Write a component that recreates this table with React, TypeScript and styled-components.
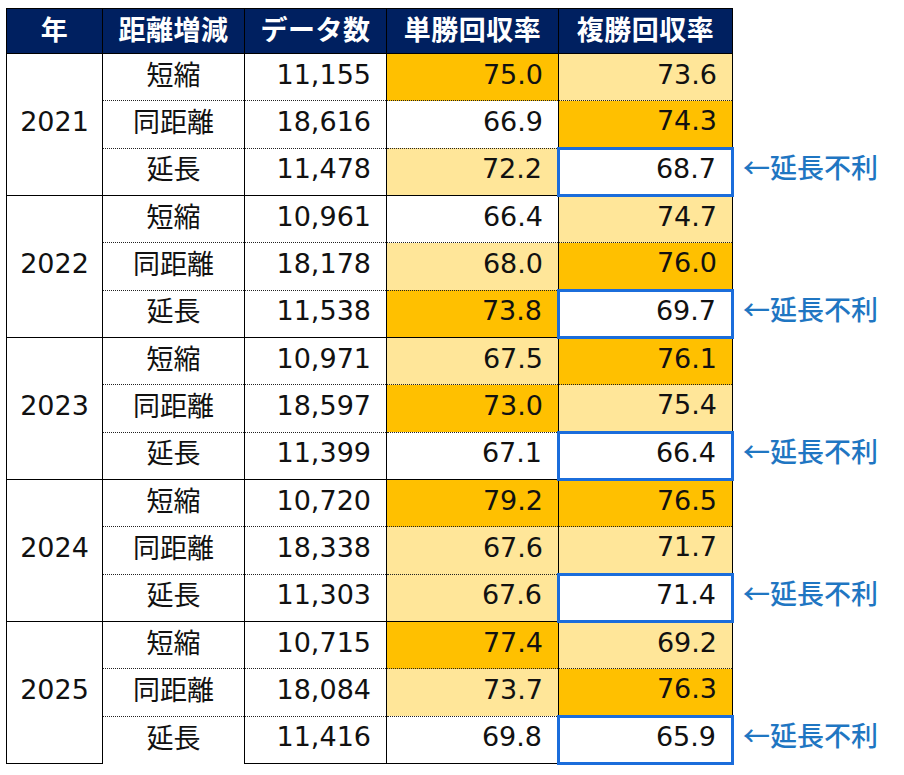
import React from 'react';
import styled, { createGlobalStyle, css } from 'styled-components';

type Tone = 'dark' | 'light' | 'none';

type Row = {
    label: string;
    count: string;
    win: [string, Tone];
    place: [string, Tone];
};

type YearGroup = {
    year: string;
    rows: Row[];
};

const data: YearGroup[] = [
    {
        year: '2021',
        rows: [
            { label: '短縮', count: '11,155', win: ['75.0', 'dark'], place: ['73.6', 'light'] },
            { label: '同距離', count: '18,616', win: ['66.9', 'none'], place: ['74.3', 'dark'] },
            { label: '延長', count: '11,478', win: ['72.2', 'light'], place: ['68.7', 'none'] },
        ],
    },
    {
        year: '2022',
        rows: [
            { label: '短縮', count: '10,961', win: ['66.4', 'none'], place: ['74.7', 'light'] },
            { label: '同距離', count: '18,178', win: ['68.0', 'light'], place: ['76.0', 'dark'] },
            { label: '延長', count: '11,538', win: ['73.8', 'dark'], place: ['69.7', 'none'] },
        ],
    },
    {
        year: '2023',
        rows: [
            { label: '短縮', count: '10,971', win: ['67.5', 'light'], place: ['76.1', 'dark'] },
            { label: '同距離', count: '18,597', win: ['73.0', 'dark'], place: ['75.4', 'light'] },
            { label: '延長', count: '11,399', win: ['67.1', 'none'], place: ['66.4', 'none'] },
        ],
    },
    {
        year: '2024',
        rows: [
            { label: '短縮', count: '10,720', win: ['79.2', 'dark'], place: ['76.5', 'dark'] },
            { label: '同距離', count: '18,338', win: ['67.6', 'light'], place: ['71.7', 'light'] },
            { label: '延長', count: '11,303', win: ['67.6', 'light'], place: ['71.4', 'none'] },
        ],
    },
    {
        year: '2025',
        rows: [
            { label: '短縮', count: '10,715', win: ['77.4', 'dark'], place: ['69.2', 'light'] },
            { label: '同距離', count: '18,084', win: ['73.7', 'light'], place: ['76.3', 'dark'] },
            { label: '延長', count: '11,416', win: ['69.8', 'none'], place: ['65.9', 'none'] },
        ],
    },
];

const headers = ['年', '距離増減', 'データ数', '単勝回収率', '複勝回収率'];
const widths = [96, 142, 142, 172, 174];

export default function App() {
    return (
        <>
            <GlobalStyle />
            <Page>
                <Table>
                    <colgroup>
                        {widths.map((w, i) => (
                            <col key={i} style={{ width: w }} />
                        ))}
                        <col />
                    </colgroup>
                    <thead>
                        <tr>
                            {headers.map((h) => (
                                <HeadCell key={h}>{h}</HeadCell>
                            ))}
                            <BlankHead />
                        </tr>
                    </thead>
                    <tbody>
                        {data.map((group) =>
                            group.rows.map((row, i) => {
                                const dotted = i > 0;
                                const isLonger = row.label === '延長';
                                return (
                                    <BodyRow key={group.year + row.label}>
                                        {i === 0 && <YearCell rowSpan={3}>{group.year}</YearCell>}
                                        <LabelCell $dotted={dotted}>{row.label}</LabelCell>
                                        <NumCell $dotted={dotted} $tone="none">{row.count}</NumCell>
                                        <NumCell $dotted={dotted} $tone={row.win[1]}>{row.win[0]}</NumCell>
                                        <NumCell $dotted={dotted} $tone={row.place[1]} $flag={isLonger}>
                                            {row.place[0]}
                                        </NumCell>
                                        <NoteCell>{isLonger ? '←延長不利' : ''}</NoteCell>
                                    </BodyRow>
                                );
                            })
                        )}
                    </tbody>
                </Table>
            </Page>
        </>
    );
}

const GlobalStyle = createGlobalStyle`
    body {
        margin: 0;
        background: #ffffff;
        font-family: "DejaVu Sans", "Noto Sans CJK JP", sans-serif;
    }
`;

const Page = styled.div`
    padding: 8px 0 0 6px;
    width: 904px;
    box-sizing: border-box;
`;

const Table = styled.table`
    border-collapse: collapse;
    table-layout: fixed;
    width: 898px;
    color: #111111;
    font-size: 27px;
`;

const HeadCell = styled.th`
    height: 39px;
    padding: 0 0 5px 0;
    background: #002060;
    color: #ffffff;
    font-family: "Noto Sans CJK JP", sans-serif;
    font-weight: 700;
    font-size: 27px;
    letter-spacing: 0.5px;
    border: 1px solid #000000;
    text-align: center;
    vertical-align: middle;
    line-height: 1;
`;

const BlankHead = styled.th`
    border: none;
    padding: 0;
`;

const BodyRow = styled.tr`
    height: 47.33px;
`;

const YearCell = styled.td`
    padding: 0 0 6px 0;
    border: 1px solid #000000;
    text-align: center;
    vertical-align: middle;
    line-height: 1;
`;

const toneColors: Record<Tone, string> = {
    dark: '#ffc000',
    light: '#ffe699',
    none: '#ffffff',
};

const LabelCell = styled.td<{ $dotted: boolean }>`
    padding: 0 0 8px 0;
    border-left: 1px solid #000000;
    border-right: 1px solid #000000;
    border-top: ${(p) => (p.$dotted ? '1px dotted #222222' : '1px solid #000000')};
    text-align: center;
    vertical-align: middle;
    font-family: "Noto Sans CJK JP", sans-serif;
    line-height: 1;
`;

const NumCell = styled.td<{ $dotted: boolean; $tone: Tone; $flag?: boolean }>`
    padding: 0 15px 6px 0;
    border-left: 1px solid #000000;
    border-right: 1px solid #000000;
    border-top: ${(p) => (p.$dotted ? '1px dotted #222222' : '1px solid #000000')};
    background: ${(p) => toneColors[p.$tone]};
    text-align: right;
    vertical-align: middle;
    line-height: 1;
    ${(p) =>
        p.$flag &&
        css`
            border: 3px solid #1b6ddb;
        `}
    tbody tr:last-child & {
        border-bottom: ${(p) => (p.$flag ? '3px solid #1b6ddb' : '1px solid #000000')};
    }
`;

const NoteCell = styled.td`
    border: none;
    padding: 0 0 10px 9px;
    color: #1f76c2;
    font-family: "Noto Sans CJK JP", sans-serif;
    font-weight: 500;
    font-size: 27px;
    white-space: nowrap;
    vertical-align: middle;
    line-height: 1;
`;
